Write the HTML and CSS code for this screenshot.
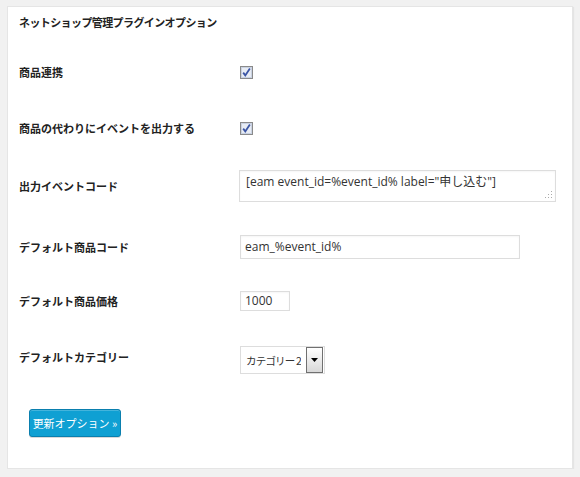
FILE: index.html
```html
<!DOCTYPE html>
<html lang="ja">
<head>
<meta charset="utf-8">
<title>ネットショップ管理プラグインオプション</title>
<link rel="stylesheet" href="styles.css">
</head>
<body>
<div class="panel">
  <h2 class="title">ネットショップ管理プラグインオプション</h2>
  <div class="form">
    <div class="label">商品連携</div>
    <div class="field"><span class="check"><svg width="13" height="13" viewBox="0 0 13 13"><rect x="0.5" y="0.5" width="12" height="12" fill="#e8ecf4" stroke="#8a8a8a"/><rect x="1.5" y="1.5" width="10" height="10" fill="none" stroke="#c9d2e2"/><path d="M3.2 6.6 L5.3 9.4 L9.9 2.6" fill="none" stroke="#3b55a5" stroke-width="1.8"/></svg></span></div>

    <div class="label">商品の代わりにイベントを出力する</div>
    <div class="field"><span class="check"><svg width="13" height="13" viewBox="0 0 13 13"><rect x="0.5" y="0.5" width="12" height="12" fill="#e8ecf4" stroke="#8a8a8a"/><rect x="1.5" y="1.5" width="10" height="10" fill="none" stroke="#c9d2e2"/><path d="M3.2 6.6 L5.3 9.4 L9.9 2.6" fill="none" stroke="#3b55a5" stroke-width="1.8"/></svg></span></div>

    <div class="label">出力イベントコード</div>
    <div class="field"><div class="textarea">[eam event_id=%event_id% label="申し込む"]<svg class="grip" width="8" height="8" viewBox="0 0 8 8"><rect x="6" y="0" width="1" height="1" fill="#aaa"/><rect x="3" y="3" width="1" height="1" fill="#aaa"/><rect x="6" y="3" width="1" height="1" fill="#aaa"/><rect x="0" y="6" width="1" height="1" fill="#aaa"/><rect x="3" y="6" width="1" height="1" fill="#aaa"/><rect x="6" y="6" width="1" height="1" fill="#aaa"/></svg></div></div>

    <div class="label">デフォルト商品コード</div>
    <div class="field"><div class="input code">eam_%event_id%</div></div>

    <div class="label">デフォルト商品価格</div>
    <div class="field"><div class="input price">1000</div></div>

    <div class="label">デフォルトカテゴリー</div>
    <div class="field"><div class="select"><span class="select-text">カテゴリー 2</span><span class="select-btn"><svg width="7" height="4" viewBox="0 0 7 4"><path d="M0 0 H7 L3.5 4 Z" fill="#000"/></svg></span></div></div>
  </div>
  <div class="actions"><span class="button">更新オプション »</span></div>
</div>
</body>
</html>
```

FILE: styles.css
```css
html, body {
  margin: 0;
  padding: 0;
  background: #f1f1f1;
}
body {
  font-family: "Noto Sans CJK JP", "Noto Sans", sans-serif;
  color: #222;
}
.panel {
  box-sizing: border-box;
  width: 566px;
  height: 463px;
  margin: 6px 0 0 7px;
  background: #fff;
  border: 1px solid #e5e5e5;
  box-shadow: 1px 1px 1px rgba(0,0,0,0.05);
  padding: 8px 0 0 11px;
}
.title {
  margin: 0;
  font-size: 11px;
  line-height: 14px;
  font-weight: bold;
  letter-spacing: -0.6px;
  color: #222;
}
.form {
  display: grid;
  grid-template-columns: 221px 1fr;
  grid-template-rows: 56px 56px 59px 64px 44px 68px;
  margin-top: 15px;
}
.label {
  display: flex;
  align-items: center;
  font-size: 11px;
  font-weight: bold;
  color: #222;
}
.field {
  display: flex;
  align-items: center;
}
.check {
  display: block;
  width: 13px;
  height: 13px;
  margin-top: 1px;
}
.check svg { display: block; }
.textarea, .input, .select {
  box-sizing: border-box;
  border: 1px solid #dddddd;
  background: #fff;
  font-family: "Open Sans", "Noto Sans CJK JP", sans-serif;
  font-size: 12px;
  color: #333;
}
.textarea {
  position: relative;
  width: 317px;
  height: 32px;
  margin-left: -1px;
  padding: 3px 0 0 6px;
  line-height: 16px;
  box-shadow: inset 0 1px 2px rgba(0,0,0,0.04);
}
.grip {
  position: absolute;
  right: 2px;
  bottom: 2px;
}
.input {
  height: 24px;
  line-height: 22px;
  padding-left: 4px;
  box-shadow: inset 0 1px 2px rgba(0,0,0,0.04);
}
.code { width: 280px; }
.price { width: 50px; height: 20px; line-height: 18px; }
.select {
  display: flex;
  align-items: center;
  width: 85px;
  height: 28px;
  padding: 0 1px 0 5px;
  margin-top: 6px;
  justify-content: space-between;
}
.select-text {
  font-family: "Noto Sans CJK JP", sans-serif;
  font-size: 10.5px;
  letter-spacing: -0.8px;
  white-space: nowrap;
  overflow: hidden;
  color: #333;
}
.select-btn {
  box-sizing: border-box;
  flex: none;
  width: 17px;
  height: 26px;
  border: 1px solid #707070;
  background: linear-gradient(#ffffff, #d8d8d8);
  display: flex;
  align-items: center;
  justify-content: center;
}
.select-btn svg { display: block; }
.actions {
  margin: 18px 0 0 10px;
}
.button {
  display: inline-block;
  box-sizing: border-box;
  width: 92px;
  height: 28px;
  line-height: 26px;
  text-align: center;
  background: #0fa0d3;
  border: 1px solid #0a7fae;
  border-radius: 3px;
  box-shadow: inset 0 1px 0 rgba(120,200,230,0.5), 0 1px 0 rgba(0,0,0,0.15);
  color: #fff;
  font-size: 11px;
}
```
